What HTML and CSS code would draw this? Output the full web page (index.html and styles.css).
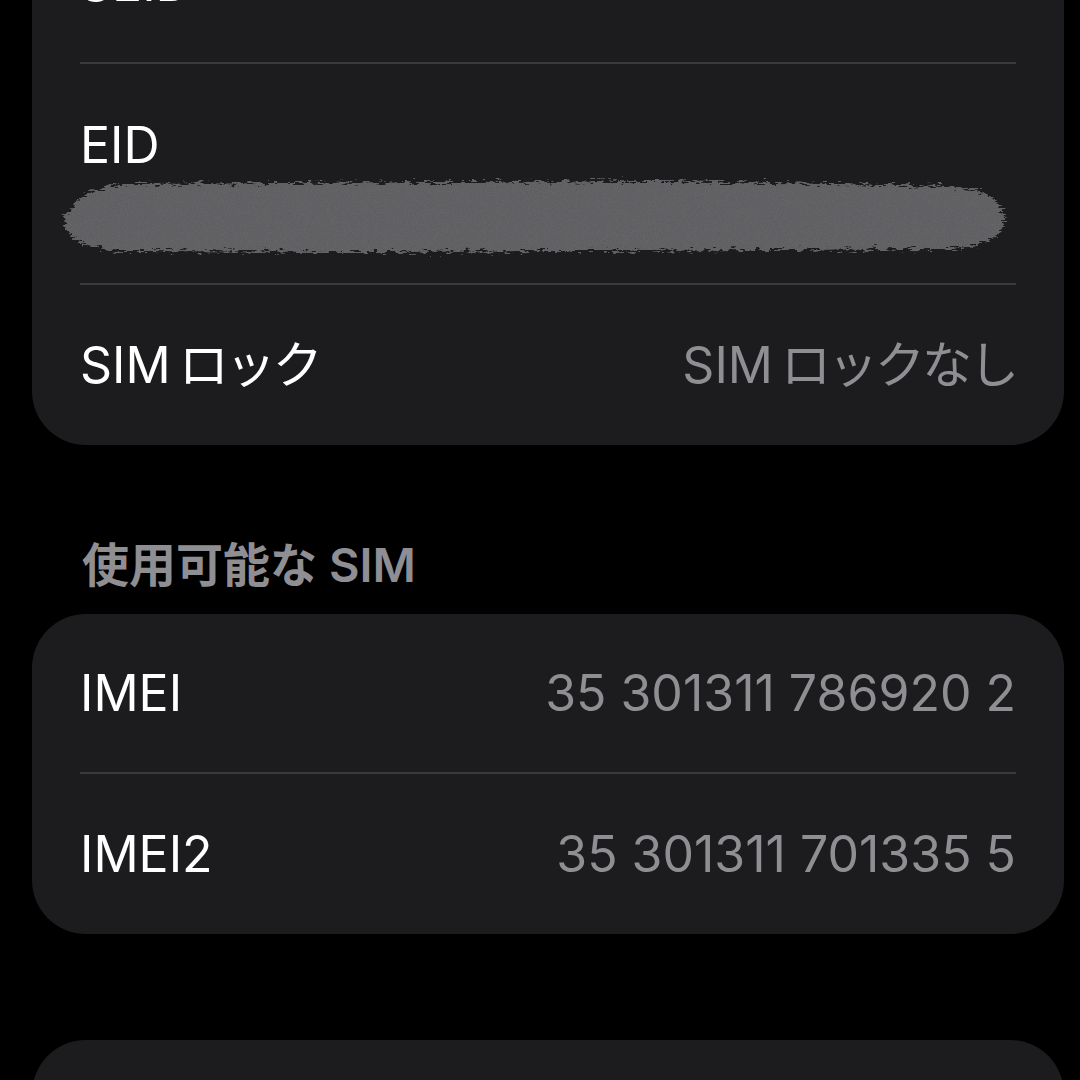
FILE: index.html
```html
<!DOCTYPE html>
<html lang="ja">
  <head>
    <meta charset="UTF-8">
    <meta name="viewport" content="width=device-width, initial-scale=1.0">
    <title>情報</title>
    <link rel="stylesheet" href="styles.css">
  </head>
  <body>
    <main class="settings">
      <section class="group">
        <div class="row">
          <span class="label">SEID</span>
          <svg class="chevron" width="18" height="32" viewBox="0 0 18 32">
            <path d="M3 3 L15 16 L3 29" fill="none" stroke="#5b5b60" stroke-width="4" stroke-linecap="round" stroke-linejoin="round"/>
          </svg>
        </div>
        <div class="row row-stacked">
          <span class="label">EID</span>
          <!-- value hidden in the original screenshot -->
          <svg class="redacted" width="950" height="84" viewBox="-3 -4 950 84">
            <defs>
              <filter id="grain" x="-2%" y="-10%" width="104%" height="120%">
                <feTurbulence type="fractalNoise" baseFrequency="0.12 0.5" numOctaves="3" seed="7" result="warp"/>
                <feDisplacementMap in="SourceGraphic" in2="warp" scale="14" xChannelSelector="R" yChannelSelector="G" result="rough"/>
                <feTurbulence type="fractalNoise" baseFrequency="0.9" numOctaves="2" seed="4" result="noise"/>
                <feColorMatrix in="noise" type="matrix" values="0 0 0 0 0.13  0 0 0 0 0.13  0 0 0 0 0.14  0 0 0 -7 3.6" result="dark"/>
                <feComposite in="dark" in2="rough" operator="in" result="specks"/>
                <feMerge>
                  <feMergeNode in="rough"/>
                  <feMergeNode in="specks"/>
                </feMerge>
              </filter>
            </defs>
            <path filter="url(#grain)" fill="#616163" d="M10 32 C14 16 40 8 68 6 L600 3 L884 8 C922 10 942 22 942 40 C942 58 926 70 882 71 L300 74 L62 73 C30 71 8 63 4 50 C0 42 4 36 10 32 Z"/>
          </svg>
        </div>
        <div class="row">
          <span class="label"><span class="latin">SIM</span><span class="jp">ロック</span></span>
          <span class="value"><span class="latin">SIM</span><span class="jp">ロックなし</span></span>
        </div>
      </section>

      <h2 class="group-title">使用可能な<span class="latin-before">SIM</span></h2>

      <section class="group">
        <div class="row">
          <span class="label">IMEI</span>
          <span class="value">35 301311 786920 2</span>
        </div>
        <div class="row">
          <span class="label">IMEI2</span>
          <span class="value">35 301311 701335 5</span>
        </div>
      </section>

      <section class="group group-next">
        <div class="row"></div>
      </section>
    </main>
  </body>
</html>
```

FILE: styles.css
```css
:root {
  --bg: #000000;
  --card: #1c1c1e;
  --separator: #3a3a3c;
  --label: #ffffff;
  --secondary: #8e8e93;
}

html, body {
  margin: 0;
  padding: 0;
  background: var(--bg);
  overflow: hidden;
  font-family: Inter, "Noto Sans CJK JP", sans-serif;
}

.settings {
  display: flex;
  flex-direction: column;
  margin-top: -96px;
}

.group {
  margin: 0 16px 0 32px;
  background: var(--card);
  border-radius: 54px;
  display: flex;
  flex-direction: column;
}

.row {
  height: 158px;
  margin: 0 48px;
  display: flex;
  align-items: center;
  justify-content: space-between;
  border-bottom: 2px solid var(--separator);
  font-size: 50px;
  line-height: 60px;
}

.row:last-child {
  height: 160px;
  border-bottom: none;
}

.row-stacked {
  height: auto;
  flex-direction: column;
  align-items: flex-start;
  padding: 51px 0 25px;
}

.label {
  color: var(--label);
}

.value {
  color: var(--secondary);
}

.latin {
  margin-right: 8px;
}

.jp {
  letter-spacing: -3px;
}

.latin-before {
  margin-left: 12px;
}

.chevron {
  margin-right: 2px;
}

.redacted {
  display: block;
  margin: -1px 0 0 -21px;
}

.group-title {
  margin: 92px 0 21px 82px;
  font-size: 47px;
  line-height: 56px;
  font-weight: 600;
  color: var(--secondary);
}

.group-next {
  margin-top: 106px;
}
```
